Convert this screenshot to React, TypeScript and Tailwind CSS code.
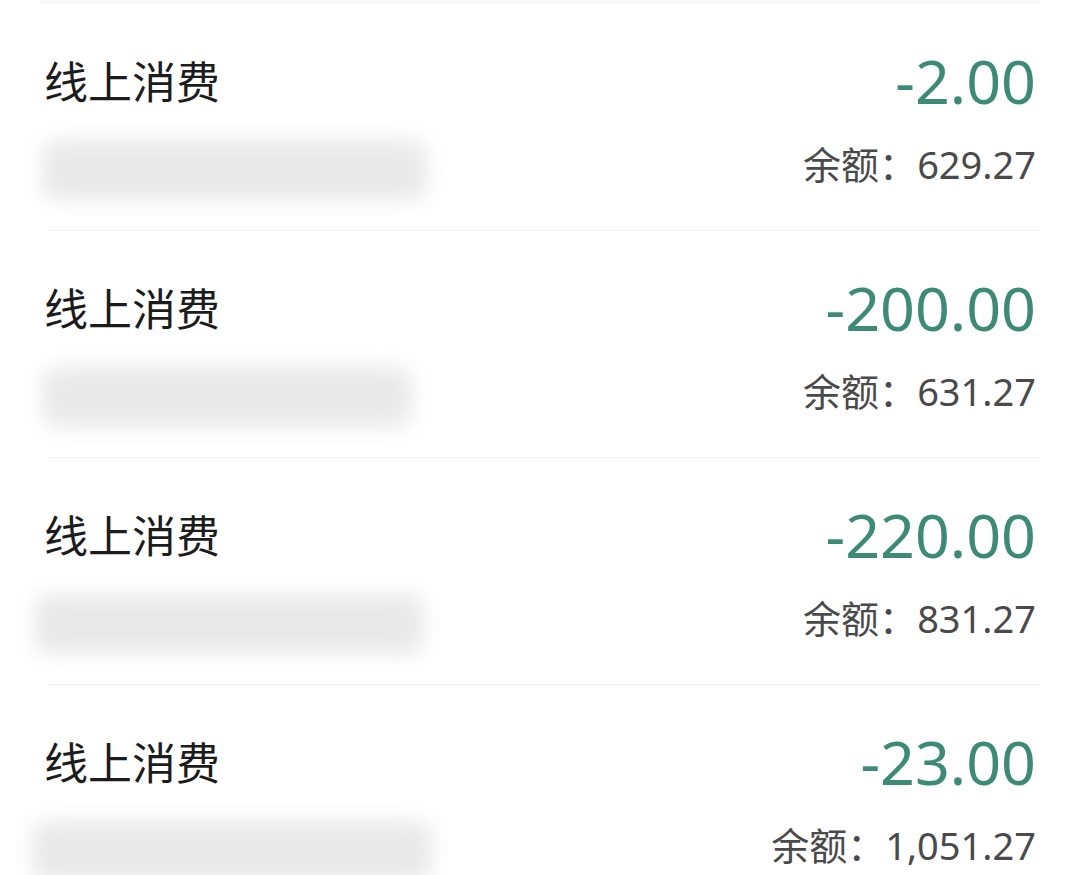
import React from "react";

const rows = [
  { amount: "-2.00", balance: "629.27", blur: "w-[385px] -ml-[2px]" },
  { amount: "-200.00", balance: "631.27", blur: "w-[370px] -ml-[2px]" },
  { amount: "-220.00", balance: "831.27", blur: "w-[390px] -ml-[10px]" },
  { amount: "-23.00", balance: "1,051.27", blur: "w-[400px] -ml-[12px]" },
];

export default function App() {
  return (
    <div className="w-[1080px] h-[875px] overflow-hidden bg-white" style={{ fontFamily: '"Noto Sans", "Noto Sans CJK SC", sans-serif' }}>
      <div className="h-[4px] ml-[40px] mr-[40px] bg-[#f8f8f8]" />
      {rows.map((r, i) => (
        <div key={i}>
          <div className="h-[226px] flex justify-between pl-[44px] pr-[44px]">
            <div className="flex flex-col pt-[54px]">
              <div
                className="text-[44px] leading-none font-normal text-[#1c1c1c]"
                style={{ fontFamily: '"Noto Sans CJK SC", sans-serif' }}
              >
                线上消费
              </div>
              <div className="mt-[38px]">
                <div className={`${r.blur} h-[60px] rounded-[16px] bg-[#e9e9e9] blur-[10px]`} />
              </div>
            </div>
            <div className="flex flex-col items-end pt-[46px]">
              <div className="text-[61px] leading-none font-normal text-[#3d8a76]">
                {r.amount}
              </div>
              <div className="mt-[33px] text-[38px] leading-none text-[#4a4a4a]">
                <span style={{ fontFamily: '"Noto Sans CJK SC", sans-serif' }}>余额：</span>
                {r.balance}
              </div>
            </div>
          </div>
          <div className="h-[1px] ml-[48px] mr-[40px] bg-[#f0f0f0]" />
        </div>
      ))}
    </div>
  );
}
